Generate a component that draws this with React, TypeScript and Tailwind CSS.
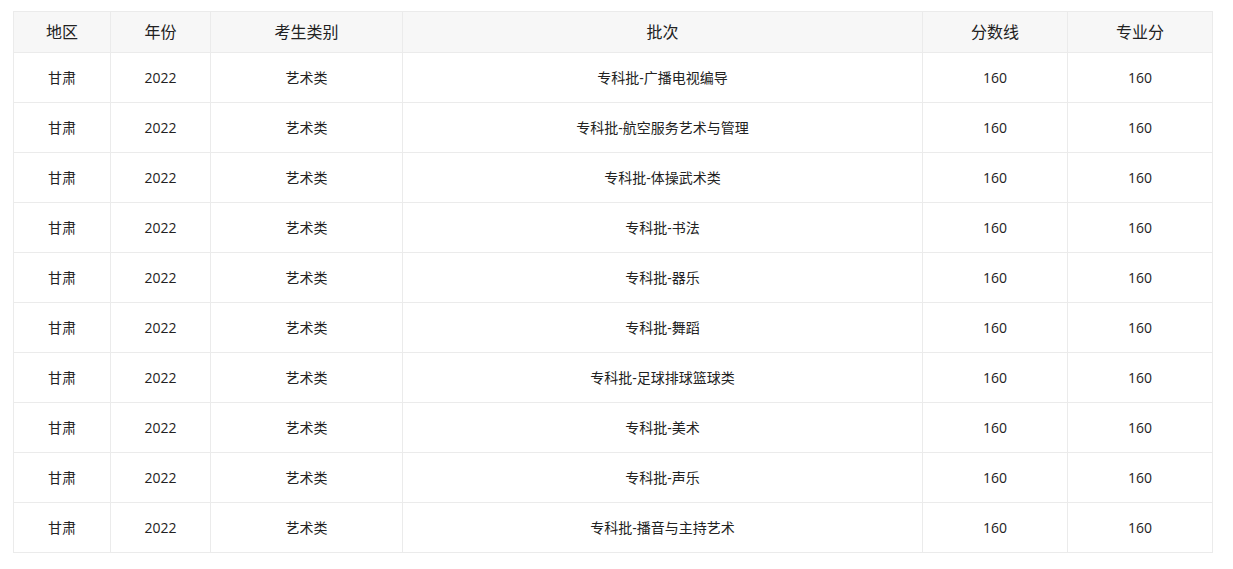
const rows = [
  "专科批-广播电视编导",
  "专科批-航空服务艺术与管理",
  "专科批-体操武术类",
  "专科批-书法",
  "专科批-器乐",
  "专科批-舞蹈",
  "专科批-足球排球篮球类",
  "专科批-美术",
  "专科批-声乐",
  "专科批-播音与主持艺术",
];

const headers = ["地区", "年份", "考生类别", "批次", "分数线", "专业分"];
const widths = [97, 100, 192, 520, 145, 145];

export default function App() {
  return (
    <div
      className="bg-white min-h-[569px] pt-[11px] pl-[13px]"
      style={{ fontFamily: '"Open Sans", "Noto Sans CJK SC", sans-serif' }}
    >
      <table className="table-fixed border-collapse w-[1200px] text-[#222]">
        <colgroup>
          {widths.map((w, i) => (
            <col key={i} style={{ width: w }} />
          ))}
        </colgroup>
        <thead>
          <tr className="bg-[#f7f7f7] h-[41px]">
            {headers.map((h) => (
              <th key={h} className="border border-[#ebebeb] font-normal text-[16px] text-center p-0">
                {h}
              </th>
            ))}
          </tr>
        </thead>
        <tbody>
          {rows.map((r, i) => (
            <tr key={i} className="h-[50px] text-[14px]">
              <td className="border border-[#ebebeb] text-center p-0">甘肃</td>
              <td className="border border-[#ebebeb] text-center p-0">2022</td>
              <td className="border border-[#ebebeb] text-center p-0">艺术类</td>
              <td className="border border-[#ebebeb] text-center p-0">{r}</td>
              <td className="border border-[#ebebeb] text-center p-0">160</td>
              <td className="border border-[#ebebeb] text-center p-0">160</td>
            </tr>
          ))}
        </tbody>
      </table>
    </div>
  );
}
